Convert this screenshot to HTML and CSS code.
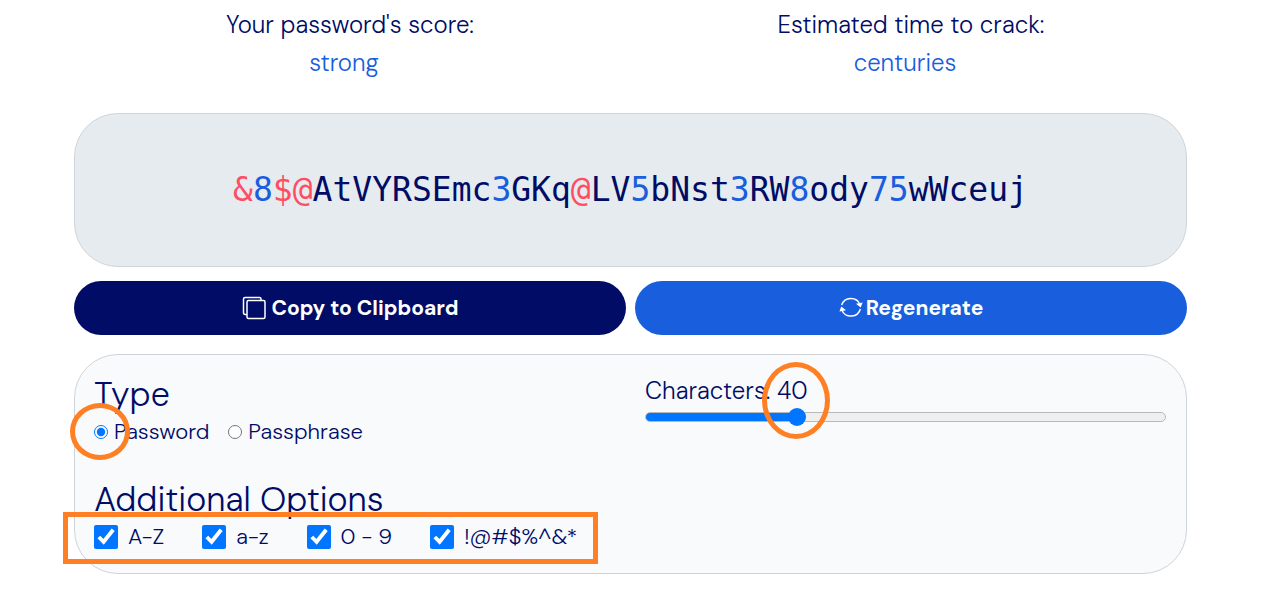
FILE: index.html
```
<!DOCTYPE html>
<html lang="en">
<head>
<meta charset="utf-8">
<meta name="viewport" content="width=device-width, initial-scale=1">
<title>Password Generator</title>
<link rel="stylesheet" href="styles.css">
</head>
<body>
<main class="generator">
  <section class="columns summary">
    <div class="stat"><div>Your password's score:</div><div class="stat-value">strong</div></div>
    <div class="stat"><div>Estimated time to crack:</div><div class="stat-value">centuries</div></div>
  </section>

  <output class="password"><span><span class="symbol">&amp;</span><span class="digit">8</span><span class="symbol">$@</span>AtVYRSEmc<span class="digit">3</span>GKq<span class="symbol">@</span>LV<span class="digit">5</span>bNst<span class="digit">3</span>RW<span class="digit">8</span>ody<span class="digit">75</span>wWceuj</span></output>

  <div class="columns actions">
    <button type="button" class="button copy">
      <svg class="icon" viewBox="0 0 24 24" aria-hidden="true"><path d="M5 18.500H3.200Q1.500 18.500 1.500 16.500V3Q1.500 1.500 3 1.500H17.500Q19 1.500 19 3V4.500"/><rect x="5" y="4.500" width="18" height="18" rx="1.500"/></svg>
      Copy to Clipboard
    </button>
    <button type="button" class="button regenerate">
      <svg class="icon" viewBox="0 0 24 24" aria-hidden="true"><path d="M2.600 9A9.900 9.900 0 0 1 21 8.500M21.400 13A9.900 9.900 0 0 1 3 14.500"/><path class="arrow" d="M17 7.700L23.600 6.400L21.700 11.600ZM7 14.300L0.400 15.600L2.300 10.400Z"/></svg>
      Regenerate
    </button>
  </div>

  <form class="columns options">
    <div class="choices">
      <fieldset class="group">
        <legend class="heading">Type</legend>
        <div class="radios">
          <label class="radio marked"><input type="radio" name="type" checked>Password<span class="mark mark-radio"></span></label>
          <label class="radio"><input type="radio" name="type">Passphrase</label>
        </div>
      </fieldset>
      <fieldset class="group">
        <legend class="heading">Additional Options</legend>
        <div class="checks marked">
          <label class="check"><input type="checkbox" checked>A-Z</label>
          <label class="check"><input type="checkbox" checked>a-z</label>
          <label class="check"><input type="checkbox" checked>0 - 9</label>
          <label class="check"><input type="checkbox" checked>!@#$%^&amp;*</label>
          <span class="mark mark-checks"></span>
        </div>
      </fieldset>
    </div>
    <div class="length marked">
      <label for="length">Characters: 40</label>
      <input class="slider" id="length" type="range" min="6" max="126" value="40">
      <span class="mark mark-length"></span>
    </div>
  </form>
</main>
</body>
</html>
```
FILE: styles.css
```
* {
  box-sizing: border-box;
}

body {
  margin: 0;
  background: #fff;
  color: #000c66;
  font-family: "DM Sans", Inter, "Liberation Sans", sans-serif;
  font-size: 24px;
  font-weight: 300;
}

.generator {
  margin: 0 92px 0 74px;
  padding: 6px 0 16px;
}

.columns {
  display: grid;
  grid-template-columns: 1fr 1fr;
  column-gap: 9px;
}

.stat {
  line-height: 38px;
  text-align: center;
}

.stat-value {
  padding-right: 12px;
  color: #195edc;
}

.password {
  display: flex;
  justify-content: center;
  margin-top: 31px;
  padding: 56px 16px;
  border: 1px solid #ced4da;
  border-radius: 44px;
  background: #e6ebef;
  font-family: Consolas, "DejaVu Sans Mono", monospace;
  font-size: 33px;
  font-weight: 400;
  line-height: 40px;
}

.symbol {
  color: #ff4d62;
}

.digit {
  color: #195edc;
}

.actions {
  margin-top: 14px;
}

.button {
  display: flex;
  align-items: center;
  justify-content: center;
  padding: 12px;
  border: 0;
  border-radius: 27px;
  color: #fff;
  font: inherit;
  font-size: 21px;
  font-weight: 700;
  line-height: 30px;
}

.copy {
  gap: 6px;
  background: #000c66;
}

.regenerate {
  gap: 3px;
  background: #195edc;
}

.icon {
  width: 24px;
  height: 24px;
  fill: none;
  stroke: #fff;
  stroke-width: 1.5;
}

.icon .arrow {
  fill: #fff;
  stroke: none;
}

.options {
  column-gap: 30px;
  margin-top: 19px;
  padding: 20px 20px 20px 19px;
  border: 1px solid #ced4da;
  border-radius: 44px;
  background: #f9fafc;
}

.choices {
  display: grid;
  gap: 32px;
}

.group {
  min-width: 0;
  margin: 0;
  padding: 0;
  border: 0;
}

.heading {
  padding: 0;
  font-size: 34px;
  line-height: 40px;
}

.marked {
  position: relative;
}

.radios {
  display: flex;
  gap: 19px;
  font-size: 22px;
  line-height: 33px;
}

.radio {
  display: flex;
  align-items: center;
  gap: 6px;
}

.radio input {
  width: 14px;
  height: 14px;
  margin: 0;
}

.checks {
  display: flex;
  gap: 38px;
  font-size: 22px;
  line-height: 33px;
}

.check {
  display: flex;
  align-items: center;
  gap: 10px;
}

.check input {
  width: 24px;
  height: 24px;
  margin: 0;
}

.length {
  align-self: start;
  line-height: 32px;
}

.slider {
  display: block;
  appearance: none;
  width: 100%;
  height: 20px;
  margin: 0;
  background: transparent;
}

.slider::-webkit-slider-runnable-track {
  height: 10px;
  border: 1px solid #b9b9b9;
  border-radius: 5px;
  background: linear-gradient(to right, #0075ff 29%, #efefef 29%) border-box;
}

.slider::-webkit-slider-thumb {
  appearance: none;
  width: 18px;
  height: 18px;
  margin-top: -5px;
  border-radius: 50%;
  background: #0075ff;
}

.mark {
  position: absolute;
  border: 5px solid #ff8024;
  pointer-events: none;
}

.mark-radio {
  top: -12px;
  left: -24px;
  width: 60px;
  height: 57px;
  border-radius: 50%;
}

.mark-checks {
  top: -8px;
  left: -31px;
  width: 535px;
  height: 52px;
}

.mark-length {
  top: -13px;
  left: 117px;
  width: 68px;
  height: 77px;
  border-radius: 50%;
}
```
